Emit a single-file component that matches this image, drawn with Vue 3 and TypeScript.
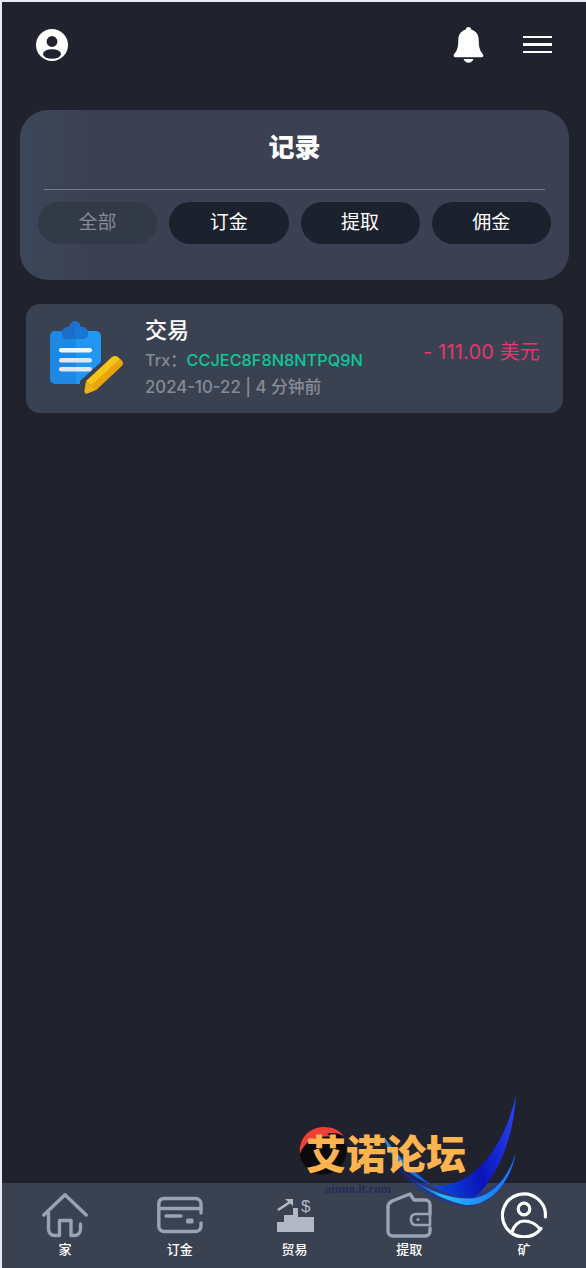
<script setup lang="ts">
const tabs = [
  { label: '全部', active: true },
  { label: '订金', active: false },
  { label: '提取', active: false },
  { label: '佣金', active: false }
]

const navItems = [
  { label: '家', icon: 'home' },
  { label: '订金', icon: 'card' },
  { label: '贸易', icon: 'trade' },
  { label: '提取', icon: 'wallet' },
  { label: '矿', icon: 'user' }
]
</script>

<template>
  <div class="page">
    <header class="topbar">
      <svg class="avatar" viewBox="0 0 32 32">
        <circle cx="16" cy="16" r="16" fill="#fff" />
        <circle cx="16" cy="12.5" r="5.4" fill="#20222e" />
        <ellipse cx="16" cy="25" rx="9" ry="4.8" fill="#20222e" />
      </svg>
      <div class="topbar-right">
        <svg class="bell" viewBox="0 0 30 36">
          <path
            fill="#fff"
            d="M15 0c1.6 0 2.7 1.2 3 2.8 4.8 1.3 7.2 5.2 7.2 10.2 0 6 .8 10.300 3.700 13.600.9 1 1.100 1.900.8 2.600-.3.700-1 1.100-2 1.100H2.300c-1 0-1.700-.4-2-1.100-.3-.7-.1-1.600.8-2.600C4 23.300 4.800 19 4.800 13c0-5 2.400-8.900 7.200-10.200C12.300 1.200 13.400 0 15 0z"
          />
          <path fill="#fff" d="M10 32h10c-.8 2.400-2.800 3.800-5 3.800S10.800 34.400 10 32z" />
        </svg>
        <div class="burger">
          <span></span>
          <span></span>
          <span></span>
        </div>
      </div>
    </header>

    <section class="panel">
      <h1 class="panel-title">记录</h1>
      <div class="divider"></div>
      <div class="tabs">
        <button
          v-for="tab in tabs"
          :key="tab.label"
          class="tab"
          :class="{ 'tab-active': tab.active }"
        >
          {{ tab.label }}
        </button>
      </div>
    </section>

    <article class="record">
      <svg class="record-icon" viewBox="0 0 74 76">
        <path fill="#1e88e5" d="M5 10h21v53H5a5 5 0 0 1-5-5V15a5 5 0 0 1 5-5z" />
        <path fill="#2196f3" d="M26 10h20a5 5 0 0 1 5 5v43a5 5 0 0 1-5 5H26z" />
        <path fill="#1c6fc9" d="M18 6h1c1-4 3-6 6-6v18H17c-3 0-5-2-5-5v-2c0-3 3-5 6-5z" />
        <path fill="#1976d2" d="M25 0c3 0 5 2 6 6h1c3 0 6 2 6 5v2c0 3-2 5-5 5h-8z" />
        <rect x="9" y="27" width="33" height="4.500" rx="2.250" fill="#f3f4f6" />
        <rect x="9" y="37" width="33" height="4.500" rx="2.250" fill="#e3e6ec" />
        <rect x="9" y="46" width="33" height="4.500" rx="2.250" fill="#e3e6ec" />
        <path fill="#3a4151" d="M30 60 62 31l12 11-30 31H30z" />
        <path fill="#f5c518" d="M36 60 62 36c2-1.500 4-1.500 6 0l4 4c1.500 2 1 3.500-.5 5L46 69z" />
        <path fill="#e9a30c" d="M41 64.500 70 38l2 2c1.500 2 1 3.500-.5 5L46 69z" />
        <path fill="#eeb310" d="M36 60l10 9-8.500 3.500c-2 .7-3.500-1-3-3z" />
      </svg>
      <div class="record-body">
        <div class="record-title">交易</div>
        <div class="record-trx">Trx：<span class="trx-code">CCJEC8F8N8NTPQ9N</span></div>
        <div class="record-date">2024-10-22 | 4 分钟前</div>
      </div>
      <div class="record-amount">- 111.00 美元</div>
    </article>

    <div class="spacer"></div>

    <nav class="bottom-nav">
      <div v-for="item in navItems" :key="item.label" class="nav-item">
        <svg v-if="item.icon === 'home'" class="nav-icon" viewBox="0 0 46 44" fill="none" stroke="#9aa3b2" stroke-width="3.400" stroke-linecap="round" stroke-linejoin="round">
          <path d="M1.800 22 23 1.800 44.200 22" />
          <path d="M6.500 20v16c0 4 2.500 6.500 6.500 6.500h4.500V27.500h11.500v15h3c4 0 6.500-2.500 6.500-6.500v-5" />
        </svg>
        <svg v-else-if="item.icon === 'card'" class="nav-icon" viewBox="0 0 46 36" fill="none" stroke="#9aa3b2" stroke-width="3.400" stroke-linecap="round">
          <path d="M44 26v3c0 3.500-2.500 5.500-5.500 5.500h-31C4 34.500 1.800 32.500 1.800 29V7c0-3.500 2.200-5.500 5.700-5.500h31c3 0 5.500 2 5.500 5.500v9" />
          <path d="M2 11.500h42" />
          <path d="M9 19h15" />
          <rect x="29" y="21.500" width="7.500" height="5" rx="1.500" fill="#9aa3b2" stroke="none" />
        </svg>
        <svg v-else-if="item.icon === 'trade'" class="nav-icon" viewBox="-4 -6 46 46">
          <path fill="#b4b8c4" d="M1 34V24h7v-7h9v-7h5v9h16v15z" />
          <path fill="none" stroke="#b4b8c4" stroke-width="2.600" d="M2 12 14 4" />
          <path fill="#b4b8c4" d="M9 1h8v7z" />
          <text x="25" y="14" class="trade-dollar">$</text>
        </svg>
        <svg v-else-if="item.icon === 'wallet'" class="nav-icon" viewBox="0 0 46 44" fill="none" stroke="#9aa3b2" stroke-width="3.400" stroke-linecap="round" stroke-linejoin="round">
          <path d="M2 14v24c0 3 2 5 5 5h32c3 0 5-2 5-5v-3" />
          <path d="M2 14c0-3 1.500-4.500 4-6L24 1l4 6h11c3 0 5 2 5 5v9" />
          <path d="M44 21H30c-3 0-5 2-5 5.500s2 5.500 5 5.500h14z" stroke-width="2.600" />
          <circle cx="32" cy="26.500" r="1.500" fill="#9aa3b2" stroke="none" />
        </svg>
        <svg v-else class="nav-icon" viewBox="0 0 46 46" fill="none" stroke="#fff" stroke-width="3.200" stroke-linecap="round">
          <path d="M44.400 25A21.500 21.500 0 1 0 40 36.500" />
          <circle cx="23" cy="17" r="5.800" />
          <path d="M11 40c2-7 7-11 12-11 7 0 12 3 16 8" />
        </svg>
        <span class="nav-label">{{ item.label }}</span>
      </div>
    </nav>

    <!-- forum watermark sits over the page and the nav -->
    <div class="watermark">
      <svg class="swoosh" viewBox="0 0 140 120">
        <defs>
          <linearGradient id="sw" x1="0" y1="0.500" x2="1" y2="0.300">
            <stop offset="0" stop-color="#1aa0f0" />
            <stop offset="0.300" stop-color="#0a49e0" />
            <stop offset="0.650" stop-color="#0a14b8" />
            <stop offset="1" stop-color="#2440f0" />
          </linearGradient>
          <linearGradient id="sw2" x1="0" y1="0.300" x2="1" y2="0.500">
            <stop offset="0" stop-color="#0d63d8" stop-opacity="0.300" />
            <stop offset="0.400" stop-color="#22c0ff" />
            <stop offset="1" stop-color="#1a70f0" />
          </linearGradient>
          <filter id="glow" x="-10%" y="-10%" width="120%" height="120%">
            <feGaussianBlur stdDeviation="1.500" />
          </filter>
        </defs>
        <path fill="#0b2bd0" opacity="0.500" filter="url(#glow)" d="M14 68C30 94 60 110 88 112 114 110 130 88 136 58 130 80 116 96 96 100 70 104 40 92 14 68z" />
        <path fill="url(#sw)" d="M4 43C8 62 30 84 53 91 80 96 120 70 136 1 134 40 120 80 96 102 75 108 40 92 4 43z" />
        <path fill="url(#sw2)" d="M30 84C50 100 70 108 86 111 110 112 130 90 136 58 130 80 115 100 95 104 75 107 50 98 30 84z" />
      </svg>
      <svg class="wm-ring" viewBox="0 0 48 48">
        <circle cx="24" cy="24" r="23.500" fill="#0a0a0c" />
        <path fill="#ee4038" d="M1 27C-1 12 10 0 25 0c8 0 15 3 20 9-6-3-12-4-17-2 2 1 3 2 4 3-12-2-26 2-31 17z" />
      </svg>
      <span class="wm-text">艾诺论坛</span>
      <span class="wm-url">ainuo.it.com</span>
    </div>
  </div>
</template>

<style scoped>
.page {
  position: relative;
  box-sizing: border-box;
  width: 586px;
  height: 1268px;
  display: flex;
  flex-direction: column;
  overflow: hidden;
  background: #20222e;
  border-top: 2px solid #e9eaf2;
  border-left: 2px solid #e9eaf2;
  font-family: Inter, "Noto Sans CJK SC", sans-serif;
  color: #fff;
}

.topbar {
  display: flex;
  align-items: center;
  justify-content: space-between;
  height: 84px;
  padding: 1px 34px 0 34px;
  box-sizing: border-box;
}

.topbar-right {
  display: flex;
  align-items: center;
  gap: 39px;
}

.avatar {
  width: 32px;
  height: 32px;
}

.bell {
  width: 31px;
  height: 36px;
}

.burger {
  display: flex;
  flex-direction: column;
  gap: 5px;
  width: 29px;
}

.burger span {
  height: 2.500px;
  background: #fff;
}

.panel {
  box-sizing: border-box;
  height: 170px;
  margin: 24px 17px 0 18px;
  padding: 0 18px;
  border-radius: 28px;
  background: linear-gradient(90deg, #3c4759 0%, #3b4152 12%, #3b4152 100%);
}

.panel-title {
  margin: 0;
  padding-top: 20px;
  height: 58px;
  box-sizing: border-box;
  text-align: center;
  font-size: 26px;
  font-weight: 900;
  line-height: 36px;
}

.divider {
  height: 1px;
  margin: 21px 6px 0 6px;
  background: #757c8c;
}

.tabs {
  display: flex;
  gap: 12px;
  margin-top: 12px;
}

.tab {
  flex: 1;
  height: 42px;
  padding: 0 0 5px;
  border: 0;
  border-radius: 21px;
  background: #1c212e;
  color: #fff;
  font-family: inherit;
  font-size: 19px;
}

.tab-active {
  background: #333a47;
  color: #858b98;
}

.record {
  box-sizing: border-box;
  display: flex;
  align-items: center;
  height: 109px;
  margin: 24px 23px 0 24px;
  padding: 0 23px 0 24px;
  border-radius: 14px;
  background: #3a4252;
}

.record-icon {
  flex: none;
  width: 74px;
  height: 76px;
}

.record-body {
  flex: 1;
  margin: 0 0 3px 21px;
}

.record-title {
  font-size: 22px;
  font-weight: 500;
  line-height: 30px;
}

.record-trx {
  margin-top: 1px;
  font-size: 16.300px;
  font-weight: 500;
  line-height: 28px;
  color: #858b98;
}

.trx-code {
  color: #0fc79a;
}

.record-date {
  font-size: 16.800px;
  font-weight: 500;
  line-height: 26px;
  color: #858b98;
}

.record-amount {
  margin-bottom: 17px;
  font-size: 20px;
  letter-spacing: 0.150px;
  color: #e0386e;
  white-space: nowrap;
}

.spacer {
  flex: 1;
}

.bottom-nav {
  display: flex;
  justify-content: space-between;
  height: 85px;
  padding: 7px 17px 0 18px;
  box-sizing: border-box;
  background: #3a4252;
}

.nav-item {
  display: flex;
  flex-direction: column;
  align-items: center;
  justify-content: flex-end;
  width: 90px;
  height: 68px;
}

.nav-icon {
  width: 46px;
  height: 46px;
}

.nav-label {
  margin-top: 2px;
  font-size: 13px;
  font-weight: 500;
  line-height: 18px;
}

.trade-dollar {
  fill: #b4b8c4;
  font-family: "Liberation Sans", sans-serif;
  font-size: 17px;
}

.watermark {
  position: absolute;
  left: 294px;
  top: 1092px;
  width: 226px;
  height: 130px;
  pointer-events: none;
}

.swoosh {
  position: absolute;
  left: 84px;
  top: 0;
  width: 140px;
  height: 120px;
}

.wm-ring {
  position: absolute;
  left: 3px;
  top: 33px;
  width: 48px;
  height: 48px;
}

.wm-text {
  position: absolute;
  left: 10px;
  top: 35px;
  font-family: "Noto Sans CJK SC", sans-serif;
  font-size: 40px;
  font-weight: 900;
  line-height: 46px;
  color: #ffb450;
  white-space: nowrap;
}

.wm-url {
  position: absolute;
  left: 29px;
  top: 88px;
  font-family: "Liberation Serif", serif;
  font-size: 12.500px;
  font-weight: 700;
  color: #232c58;
}
</style>
